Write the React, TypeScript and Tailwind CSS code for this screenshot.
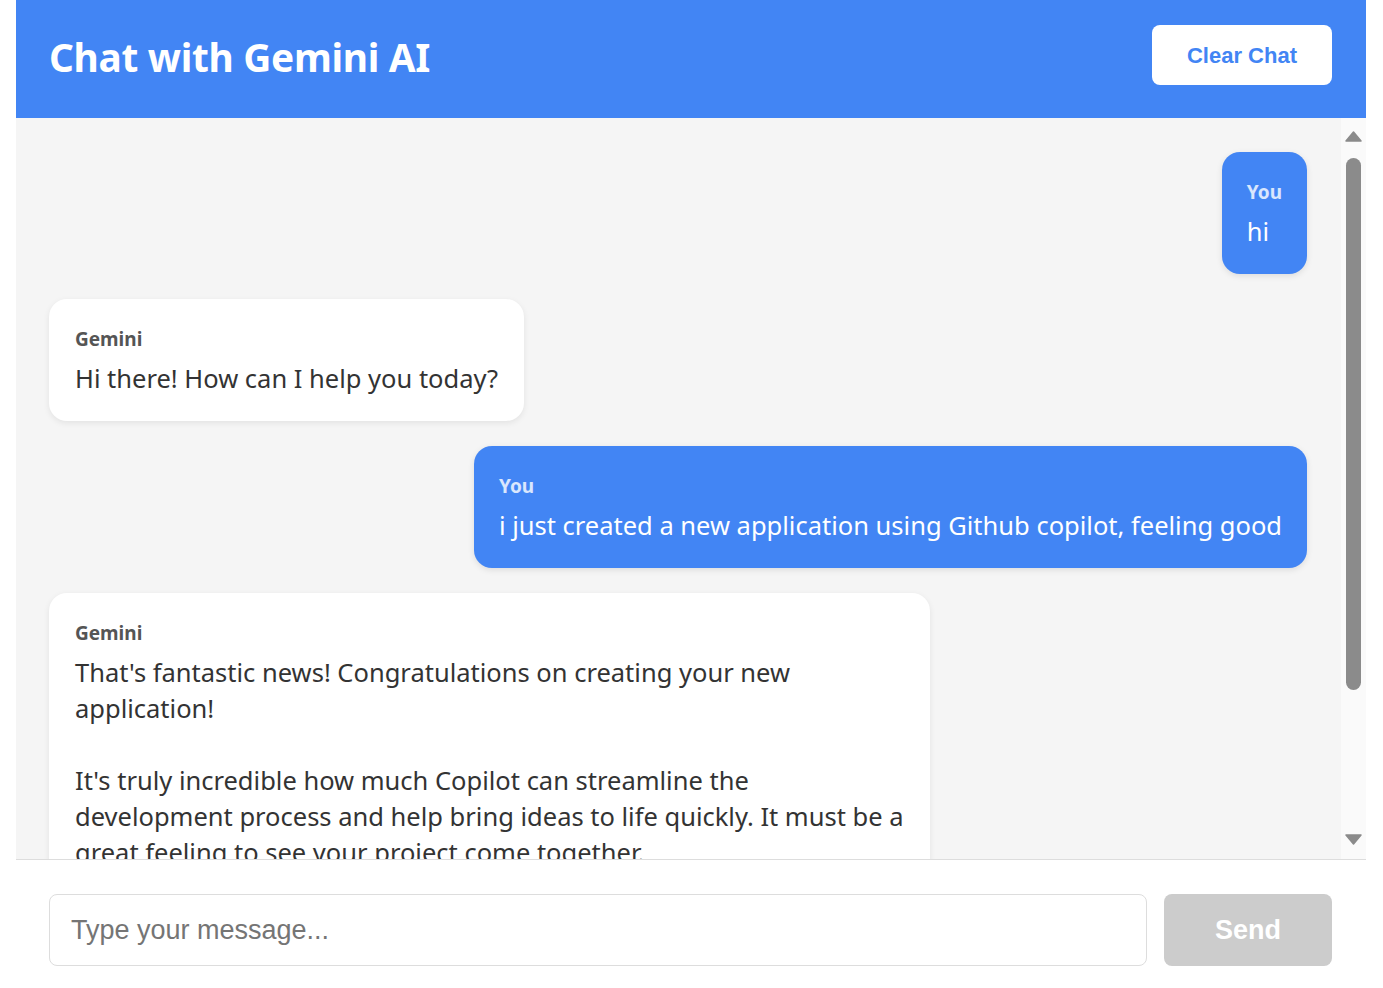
import React, { useState } from 'react';

type Message = {
  sender: 'user' | 'gemini';
  text: string;
};

const initialMessages: Message[] = [
  { sender: 'user', text: 'hi' },
  { sender: 'gemini', text: 'Hi there! How can I help you today?' },
  { sender: 'user', text: 'i just created a new application using Github copilot, feeling good' },
  {
    sender: 'gemini',
    text:
      "That's fantastic news! Congratulations on creating your new application!\n\nIt's truly incredible how much Copilot can streamline the development process and help bring ideas to life quickly. It must be a great feeling to see your project come together.\n\nWhat kind of application did you build? I'd love to hear more about it and what features you included!",
  },
];

const uiFont = "font-['Segoe_UI','Noto_Sans',sans-serif]";
const arialFont = "font-['Liberation_Sans',Arial,sans-serif]";

export default function App() {
  const [messages, setMessages] = useState<Message[]>(initialMessages);
  const [input, setInput] = useState('');

  return (
    <div className="h-screen overflow-hidden bg-white">
      <div className="ml-4 w-[1350px] flex flex-col">
        {/* Header */}
        <header className="h-[118px] bg-[#4285f4] flex items-center justify-between pl-[34px] pr-[34px] pb-[8px]">
          <h1 className={`${uiFont} text-[38.8px] font-bold text-white leading-none tracking-[-0.3px] mt-[4px] -ml-[1px]`}>
            Chat with Gemini AI
          </h1>
          <button
            onClick={() => setMessages([])}
            className={`${arialFont} w-[180px] h-[60px] bg-white rounded-lg text-[#4285f4] text-[22px] font-bold`}
          >
            Clear Chat
          </button>
        </header>

        {/* Messages + scrollbar */}
        <div className="h-[741px] flex bg-[#f5f5f5]">
          <div className="flex-1 overflow-hidden pl-[33px] pr-[34px] py-[34px] flex flex-col gap-[25px]">
            {messages.map((m, i) => (
              <div
                key={i}
                className={
                  m.sender === 'user'
                    ? 'self-end max-w-[70%] bg-[#4285f4] rounded-[18px] px-[25px] pt-[26px] pb-[25px] shadow-[0_2px_6px_rgba(0,0,0,0.1)]'
                    : 'self-start max-w-[70%] bg-white rounded-[18px] px-[26px] pt-[26px] pb-[25px] shadow-[0_2px_6px_rgba(0,0,0,0.08)]'
                }
              >
                <div
                  className={`${uiFont} text-[19px] leading-[28px] font-bold mb-[7px] ${
                    m.sender === 'user' ? 'text-white/80' : 'text-[#555]'
                  }`}
                >
                  {m.sender === 'user' ? 'You' : 'Gemini'}
                </div>
                <div
                  className={`${uiFont} text-[25.5px] leading-[36px] whitespace-pre-wrap ${
                    m.sender === 'user' ? 'text-white' : 'text-[#333]'
                  }`}
                >
                  {m.text}
                </div>
              </div>
            ))}
          </div>

          {/* scrollbar */}
          <div className="w-[25px] bg-[#fafafa] flex flex-col items-center pt-[13px] pb-[14px]">
            <svg width="17" height="11" viewBox="0 0 17 11">
              <path d="M8.5 1 L16 10 L1 10 Z" fill="#8b8b8b" stroke="#8b8b8b" strokeLinejoin="round" strokeWidth="1.5" />
            </svg>
            <div className="mt-[16px] w-[15px] h-[532px] rounded-full bg-[#8b8b8b]" />
            <div className="flex-1" />
            <svg width="17" height="11" viewBox="0 0 17 11">
              <path d="M1 1 L16 1 L8.5 10 Z" fill="#8b8b8b" stroke="#8b8b8b" strokeLinejoin="round" strokeWidth="1.5" />
            </svg>
          </div>
        </div>

        {/* Input */}
        <div className="border-t border-[#ddd] bg-white pl-[33px] pr-[34px] pt-[34px] pb-[33px] flex gap-[17px]">
          <input
            value={input}
            onChange={(e) => setInput(e.target.value)}
            placeholder="Type your message..."
            className={`${arialFont} flex-1 h-[72px] border border-[#ddd] rounded-lg px-[21px] text-[27px] text-[#333] placeholder:text-[#757575] outline-none`}
          />
          <button
            disabled={!input.trim()}
            className={`${arialFont} w-[168px] h-[72px] rounded-lg bg-[#ccc] text-white text-[27px] font-bold`}
          >
            Send
          </button>
        </div>
      </div>
    </div>
  );
}
